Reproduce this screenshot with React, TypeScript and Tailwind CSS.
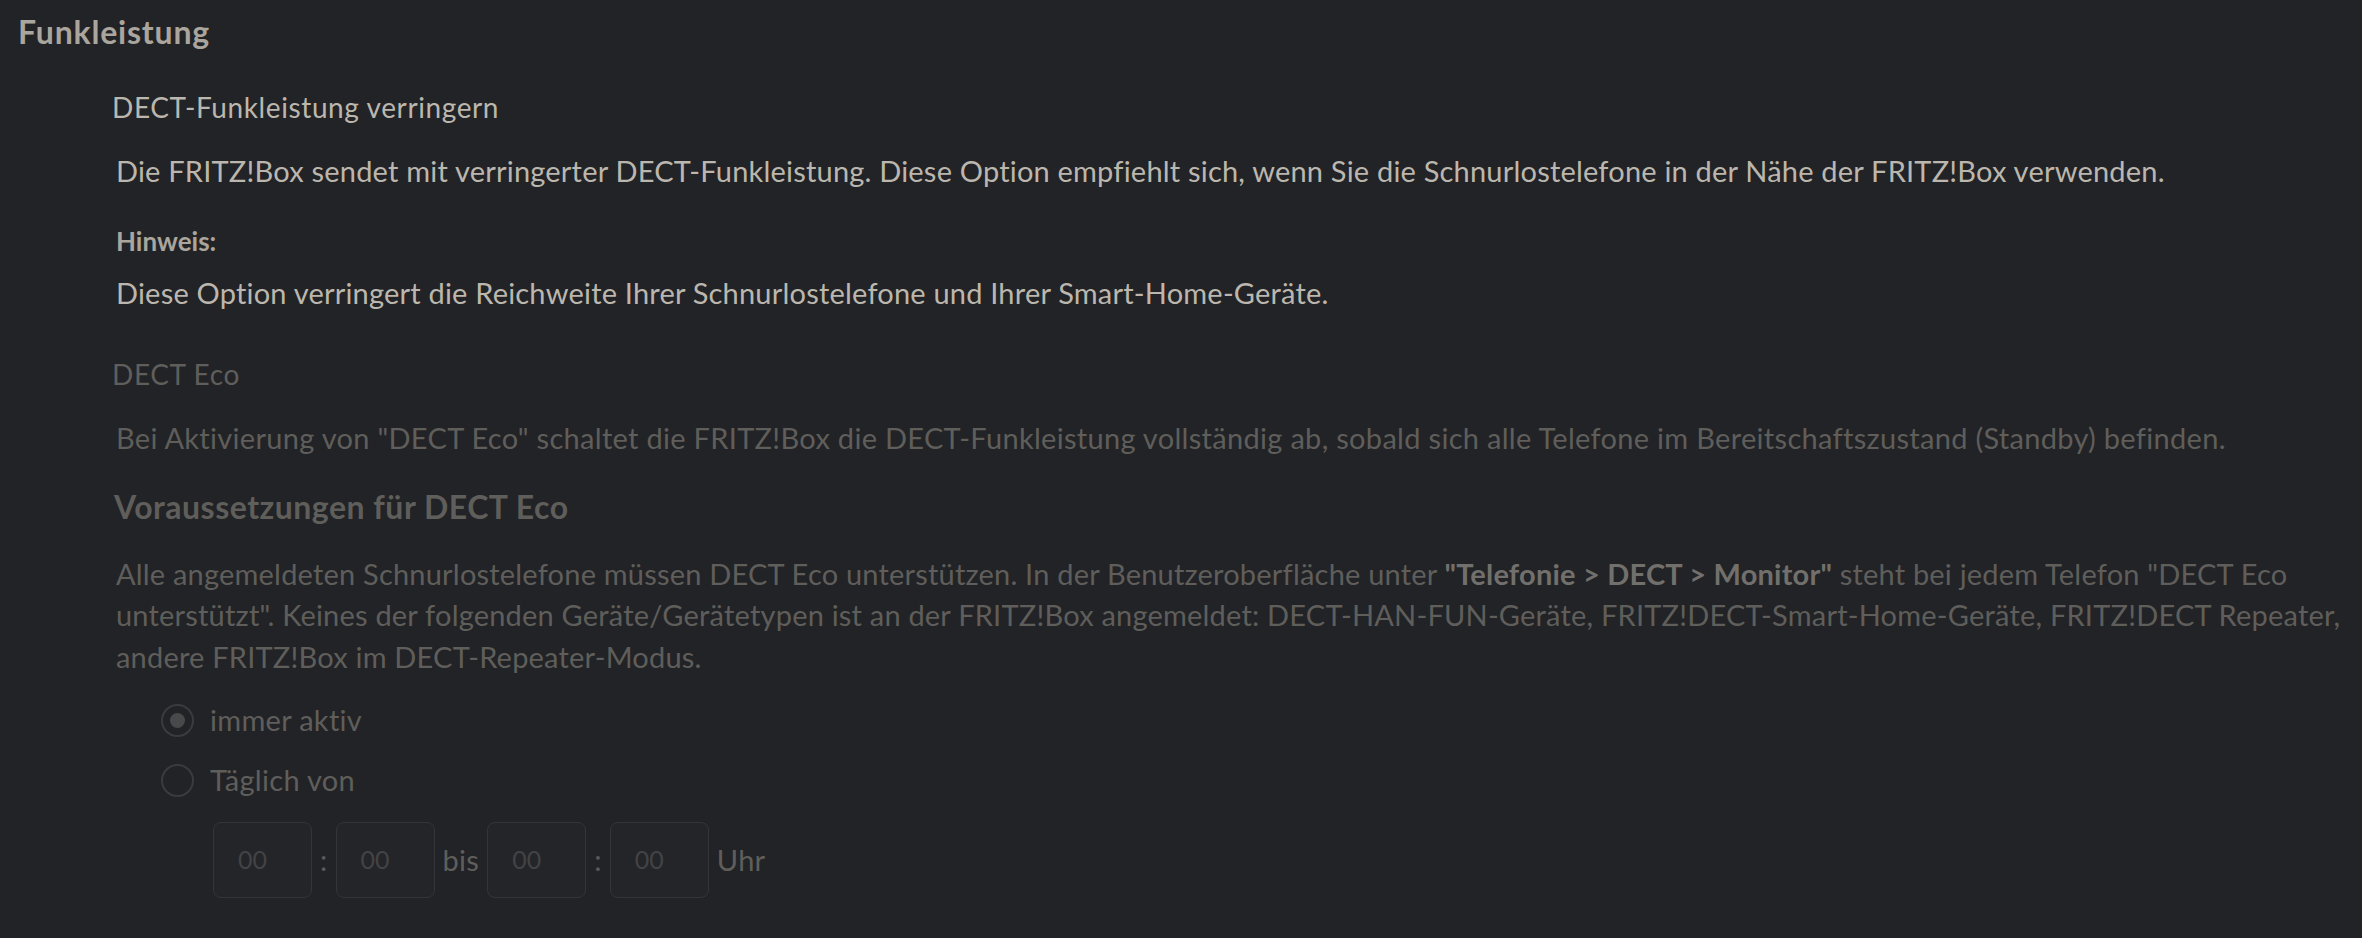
export default function App() {
  return (
    <div
      className="min-h-[938px] w-full bg-[#222326] pt-[13px] pl-[18px] pr-[20px] text-[#bcb7ae]"
      style={{ fontFamily: "Lato, 'Noto Sans', sans-serif" }}
    >
      <h1 className="text-[32px] leading-[1.2] font-bold tracking-[0.8px] text-[#aaa59d]">Funkleistung</h1>

      <div className="ml-[94px]">
        <h2 className="mt-[40px] text-[28px] leading-[1.2] tracking-[0.6px]">DECT-Funkleistung verringern</h2>
        <p className="mt-[29px] pl-[4px] text-[29px] leading-[1.2] tracking-[0.2px]">
          Die FRITZ!Box sendet mit verringerter DECT-Funkleistung. Diese Option empfiehlt sich, wenn Sie die
          Schnurlostelefone in der Nähe der FRITZ!Box verwenden.
        </p>
        <div className="mt-[37px] pl-[4px] text-[26px] leading-[1.2] font-bold text-[#aaa59d]">Hinweis:</div>
        <p className="mt-[19px] pl-[4px] text-[29px] leading-[1.2] tracking-[0.2px]">
          Diese Option verringert die Reichweite Ihrer Schnurlostelefone und Ihrer Smart-Home-Geräte.
        </p>

        <div className="text-[#5f5e5b]">
          <h2 className="mt-[47px] text-[28px] leading-[1.2] tracking-[0.6px]">DECT Eco</h2>
          <p className="mt-[30px] pl-[4px] text-[29px] leading-[1.2] tracking-[0.3px]">
            Bei Aktivierung von "DECT Eco" schaltet die FRITZ!Box die DECT-Funkleistung vollständig ab, sobald sich
            alle Telefone im Bereitschaftszustand (Standby) befinden.
          </p>
          <h3 className="mt-[32px] pl-[2px] text-[32px] leading-[1.2] font-bold tracking-[0.5px]">
            Voraussetzungen für DECT Eco
          </h3>
          <p className="mt-[26px] pl-[4px] text-[29px] leading-[41.5px] tracking-[0.2px]">
            Alle angemeldeten Schnurlostelefone müssen DECT Eco unterstützen. In der Benutzeroberfläche unter{" "}
            <b className="font-bold text-[#72706c]">"Telefonie &gt; DECT &gt; Monitor"</b> steht bei jedem Telefon
            "DECT Eco unterstützt". Keines der folgenden Geräte/Gerätetypen ist an der FRITZ!Box angemeldet:
            DECT-HAN-FUN-Geräte, FRITZ!DECT-Smart-Home-Geräte, FRITZ!DECT Repeater, andere FRITZ!Box im
            DECT-Repeater-Modus.
          </p>

          <div className="mt-[23px] ml-[49px] flex flex-col gap-[20px]">
            <Radio label="immer aktiv" checked />
            <Radio label="Täglich von" />
          </div>

          <div className="mt-[22px] ml-[101px] flex items-center gap-[8px] text-[29px] tracking-[0.3px]">
            <TimeBox />
            <span className="text-[#5a5a5a]">:</span>
            <TimeBox />
            <span>bis</span>
            <TimeBox />
            <span className="text-[#5a5a5a]">:</span>
            <TimeBox />
            <span>Uhr</span>
          </div>
        </div>
      </div>
    </div>
  );
}

function Radio({ label, checked }: { label: string; checked?: boolean }) {
  return (
    <label className="flex h-[40px] items-center gap-[16px]">
      <span className="flex h-[33px] w-[33px] items-center justify-center rounded-full border-[2px] border-[#3a3b3d]">
        {checked && <span className="h-[15px] w-[15px] rounded-full bg-[#48494a]" />}
      </span>
      <span className="text-[29px] leading-[1.2] tracking-[0.3px]">{label}</span>
    </label>
  );
}

function TimeBox() {
  return (
    <div className="flex h-[76px] w-[99px] items-center rounded-[8px] border border-[#343538] bg-[#242528] pl-[24px] text-[25px] tracking-normal text-[#424345]">
      00
    </div>
  );
}
